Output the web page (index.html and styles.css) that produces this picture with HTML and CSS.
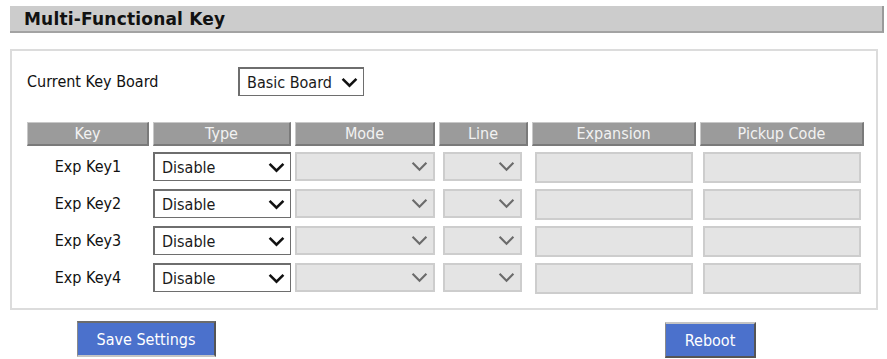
FILE: index.html
```html
<!DOCTYPE html>
<html>
<head>
<meta charset="utf-8">
<link rel="stylesheet" href="styles.css">
</head>
<body>
<div class="page">
  <div class="title-bar"><span class="title">Multi-Functional Key</span></div>
  <div class="panel">
    <div class="board-row">
      <span class="board-label">Current Key Board</span>
      <div class="sel sel-board"><span>Basic Board</span><svg class="chev" viewBox="0 0 16 10" width="17" height="11"><path d="M1.5 1.5 L8 8 L14.5 1.5" fill="none" stroke="#111" stroke-width="2.4"/></svg></div>
    </div>
    <div class="grid">
      <div class="th">Key</div>
      <div class="th">Type</div>
      <div class="th">Mode</div>
      <div class="th">Line</div>
      <div class="th">Expansion</div>
      <div class="th">Pickup Code</div>

      <div class="cell key"><span>Exp Key1</span></div>
      <div class="cell"><div class="sel sel-type"><span>Disable</span><svg class="chev" viewBox="0 0 16 10" width="17" height="11"><path d="M1.5 1.5 L8 8 L14.5 1.5" fill="none" stroke="#111" stroke-width="2.4"/></svg></div></div>
      <div class="cell"><div class="sel dis sel-mode"><span></span><svg class="chev" viewBox="0 0 16 10" width="17" height="11"><path d="M1.5 1.5 L8 8 L14.5 1.5" fill="none" stroke="#6b6b6b" stroke-width="2"/></svg></div></div>
      <div class="cell"><div class="sel dis sel-line"><span></span><svg class="chev" viewBox="0 0 16 10" width="17" height="11"><path d="M1.5 1.5 L8 8 L14.5 1.5" fill="none" stroke="#6b6b6b" stroke-width="2"/></svg></div></div>
      <div class="cell"><div class="inp"></div></div>
      <div class="cell"><div class="inp"></div></div>

      <div class="cell key"><span>Exp Key2</span></div>
      <div class="cell"><div class="sel sel-type"><span>Disable</span><svg class="chev" viewBox="0 0 16 10" width="17" height="11"><path d="M1.5 1.5 L8 8 L14.5 1.5" fill="none" stroke="#111" stroke-width="2.4"/></svg></div></div>
      <div class="cell"><div class="sel dis sel-mode"><span></span><svg class="chev" viewBox="0 0 16 10" width="17" height="11"><path d="M1.5 1.5 L8 8 L14.5 1.5" fill="none" stroke="#6b6b6b" stroke-width="2"/></svg></div></div>
      <div class="cell"><div class="sel dis sel-line"><span></span><svg class="chev" viewBox="0 0 16 10" width="17" height="11"><path d="M1.5 1.5 L8 8 L14.5 1.5" fill="none" stroke="#6b6b6b" stroke-width="2"/></svg></div></div>
      <div class="cell"><div class="inp"></div></div>
      <div class="cell"><div class="inp"></div></div>

      <div class="cell key"><span>Exp Key3</span></div>
      <div class="cell"><div class="sel sel-type"><span>Disable</span><svg class="chev" viewBox="0 0 16 10" width="17" height="11"><path d="M1.5 1.5 L8 8 L14.5 1.5" fill="none" stroke="#111" stroke-width="2.4"/></svg></div></div>
      <div class="cell"><div class="sel dis sel-mode"><span></span><svg class="chev" viewBox="0 0 16 10" width="17" height="11"><path d="M1.5 1.5 L8 8 L14.5 1.5" fill="none" stroke="#6b6b6b" stroke-width="2"/></svg></div></div>
      <div class="cell"><div class="sel dis sel-line"><span></span><svg class="chev" viewBox="0 0 16 10" width="17" height="11"><path d="M1.5 1.5 L8 8 L14.5 1.5" fill="none" stroke="#6b6b6b" stroke-width="2"/></svg></div></div>
      <div class="cell"><div class="inp"></div></div>
      <div class="cell"><div class="inp"></div></div>

      <div class="cell key"><span>Exp Key4</span></div>
      <div class="cell"><div class="sel sel-type"><span>Disable</span><svg class="chev" viewBox="0 0 16 10" width="17" height="11"><path d="M1.5 1.5 L8 8 L14.5 1.5" fill="none" stroke="#111" stroke-width="2.4"/></svg></div></div>
      <div class="cell"><div class="sel dis sel-mode"><span></span><svg class="chev" viewBox="0 0 16 10" width="17" height="11"><path d="M1.5 1.5 L8 8 L14.5 1.5" fill="none" stroke="#6b6b6b" stroke-width="2"/></svg></div></div>
      <div class="cell"><div class="sel dis sel-line"><span></span><svg class="chev" viewBox="0 0 16 10" width="17" height="11"><path d="M1.5 1.5 L8 8 L14.5 1.5" fill="none" stroke="#6b6b6b" stroke-width="2"/></svg></div></div>
      <div class="cell"><div class="inp"></div></div>
      <div class="cell"><div class="inp"></div></div>
    </div>
  </div>
  <div class="buttons">
    <button class="btn btn-save">Save Settings</button>
    <button class="btn btn-reboot">Reboot</button>
  </div>
</div>
</body>
</html>
```

FILE: styles.css
```css
html, body {
  margin: 0;
  padding: 0;
  background: #fff;
}
body {
  font-family: "DejaVu Sans Condensed", "DejaVu Sans", sans-serif;
  font-size: 16px;
  color: #111;
}
.page {
  padding: 6px 3px 0 10px;
  width: 874px;
}
.title-bar {
  height: 25px;
  background: #cccccc;
  border-bottom: 2px solid #a3a3a3;
  border-right: 2px solid #9a9a9a;
  display: flex;
  align-items: center;
  padding-left: 14px;
  box-sizing: content-box;
  width: 858px;
}
.title {
  font-family: "DejaVu Sans", sans-serif;
  font-weight: bold;
  font-size: 17px;
  color: #111;
  letter-spacing: 0.2px;
}
.panel {
  margin-top: 16px;
  width: 868px;
  border: 2px solid #dcdcdc;
  padding: 16px 0 17px 15px;
  box-sizing: border-box;
  height: 261px;
}
.board-row {
  display: flex;
  align-items: center;
  height: 29px;
}
.board-label {
  width: 211px;
}
.sel {
  display: flex;
  align-items: center;
  justify-content: space-between;
  box-sizing: border-box;
  height: 29px;
  background: #fff;
  border: 1px solid #6e6e6e;
  border-left-width: 2px;
  border-top-width: 2px;
  padding: 0 5px 0 7px;
  color: #1a1a1a;
}
.chev {
  flex: none;
}
.sel-board {
  width: 126px;
}
.grid {
  margin-top: 26px;
  display: grid;
  grid-template-columns: 122px 138px 140px 89px 164px 164px;
  column-gap: 4px;
  grid-auto-rows: 37px;
  grid-template-rows: 24px;
}
.th {
  height: 24px;
  box-sizing: border-box;
  background: #9b9b9b;
  border-top: 1px solid #c8c8c8;
  border-left: 1px solid #c8c8c8;
  border-bottom: 2px solid #7a7a7a;
  border-right: 2px solid #7a7a7a;
  color: #f2f2f2;
  display: flex;
  align-items: center;
  justify-content: center;
}
.cell {
  display: flex;
  align-items: flex-start;
  padding-top: 6px;
}
.key {
  justify-content: center;
  align-items: center;
  height: 29px;
  padding-top: 6px;
}
.sel-type {
  width: 140px;
}
.sel-mode {
  width: 140px;
}
.sel-line {
  width: 79px;
  margin-left: 4px;
}
.dis {
  background: #e4e4e4;
  border: 2px solid #cdcdcd;
}
.inp {
  width: 158px;
  height: 31px;
  box-sizing: border-box;
  background: #e4e4e4;
  border: 2px solid #cdcdcd;
  margin-left: 3px;
}
.buttons {
  display: flex;
  align-items: flex-start;
  padding-left: 67px;
  margin-top: 11px;
}
.btn {
  font-family: "DejaVu Sans Condensed", "DejaVu Sans", sans-serif;
  font-size: 16px;
  color: #fff;
  background: #4b71cc;
  height: 36px;
  box-sizing: border-box;
  border-top: 2px solid #6c6c6c;
  border-left: 1px solid #8a8a8a;
  border-right: 2px solid #555;
  border-bottom: 2px solid #c4c4c4;
  padding: 0;
  cursor: pointer;
}
.btn-save {
  width: 139px;
}
.btn-reboot {
  width: 91px;
  margin-left: 449px;
  margin-top: 1px;
  border-top: 2px solid #c4c4c4;
  border-bottom: 2px solid #555;
}
```
